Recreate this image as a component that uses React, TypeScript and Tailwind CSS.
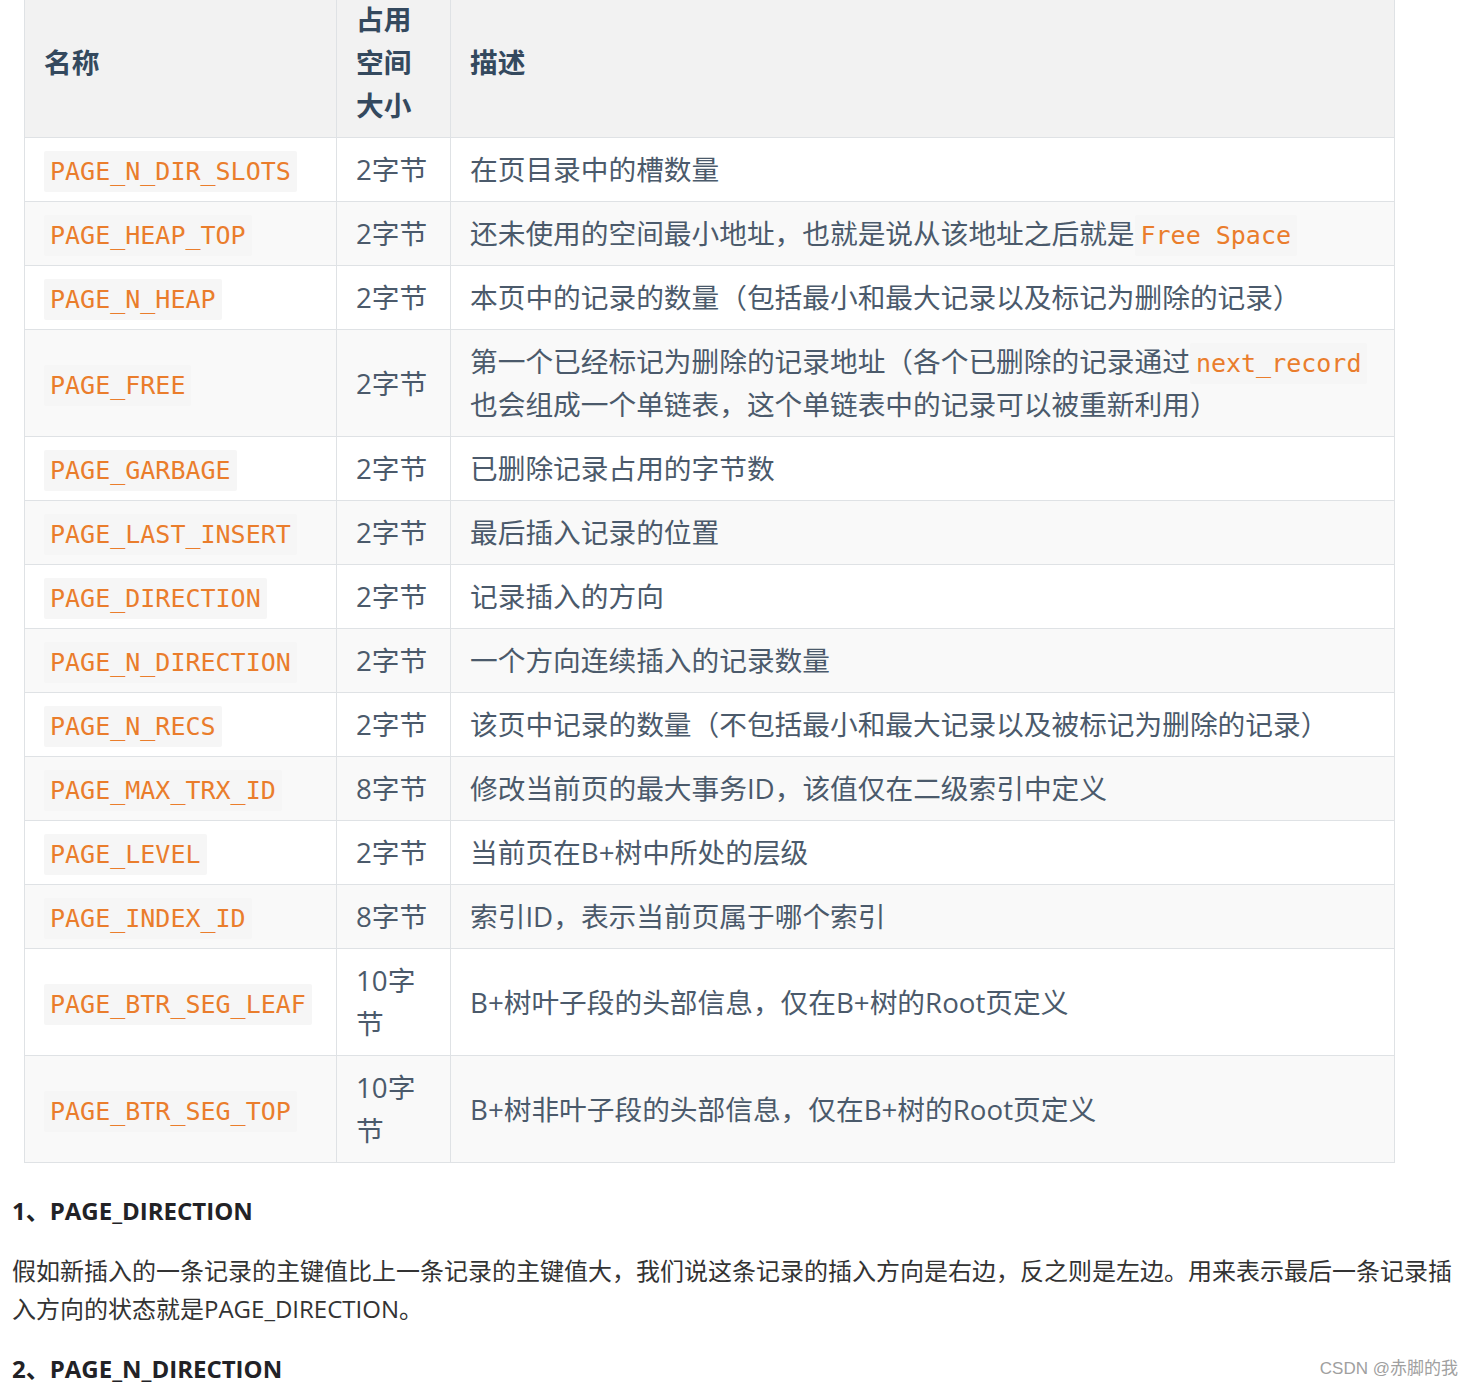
import React from "react";

type Part = string | { code: string } | { br: true };
type Row = { name: string; size: string; desc: Part[] };

const rows: Row[] = [
  { name: "PAGE_N_DIR_SLOTS", size: "2字节", desc: ["在页目录中的槽数量"] },
  { name: "PAGE_HEAP_TOP", size: "2字节", desc: ["还未使用的空间最小地址，也就是说从该地址之后就是", { code: "Free Space" }] },
  { name: "PAGE_N_HEAP", size: "2字节", desc: ["本页中的记录的数量（包括最小和最大记录以及标记为删除的记录）"] },
  { name: "PAGE_FREE", size: "2字节", desc: ["第一个已经标记为删除的记录地址（各个已删除的记录通过", { code: "next_record" }, { br: true }, "也会组成一个单链表，这个单链表中的记录可以被重新利用）"] },
  { name: "PAGE_GARBAGE", size: "2字节", desc: ["已删除记录占用的字节数"] },
  { name: "PAGE_LAST_INSERT", size: "2字节", desc: ["最后插入记录的位置"] },
  { name: "PAGE_DIRECTION", size: "2字节", desc: ["记录插入的方向"] },
  { name: "PAGE_N_DIRECTION", size: "2字节", desc: ["一个方向连续插入的记录数量"] },
  { name: "PAGE_N_RECS", size: "2字节", desc: ["该页中记录的数量（不包括最小和最大记录以及被标记为删除的记录）"] },
  { name: "PAGE_MAX_TRX_ID", size: "8字节", desc: ["修改当前页的最大事务ID，该值仅在二级索引中定义"] },
  { name: "PAGE_LEVEL", size: "2字节", desc: ["当前页在B+树中所处的层级"] },
  { name: "PAGE_INDEX_ID", size: "8字节", desc: ["索引ID，表示当前页属于哪个索引"] },
  { name: "PAGE_BTR_SEG_LEAF", size: "10字节", desc: ["B+树叶子段的头部信息，仅在B+树的Root页定义"] },
  { name: "PAGE_BTR_SEG_TOP", size: "10字节", desc: ["B+树非叶子段的头部信息，仅在B+树的Root页定义"] },
];

function Code({ children }: { children: React.ReactNode }) {
  return (
    <code className="font-['DejaVu_Sans_Mono','Liberation_Mono',monospace] text-[25px] leading-none text-[#ea7d2c] bg-[#f6f6f6] px-[6px] py-[6px] rounded-[2px] whitespace-nowrap">
      {children}
    </code>
  );
}

export default function App() {
  return (
    <div className="relative w-[1474px] h-[1389px] overflow-hidden bg-white">
      <div className="px-[12px]">
        <table className="table-fixed border-collapse w-[1370px] ml-[12px] -mt-[13px] font-['Open_Sans','Noto_Sans_CJK_SC',sans-serif] text-[27.7px] leading-[43px] text-[#4b5a6b]">
          <colgroup>
            <col className="w-[312px]" />
            <col className="w-[114px]" />
            <col className="w-[944px]" />
          </colgroup>
          <thead>
            <tr className="bg-[#f2f2f2]">
              <th className="border border-[#dfe2e5] px-[19px] py-[10px] text-left font-bold text-[#34495e]">名称</th>
              <th className="border border-[#dfe2e5] px-[19px] py-[10px] text-left font-bold text-[#34495e]">占用空间大小</th>
              <th className="border border-[#dfe2e5] px-[19px] py-[10px] text-left font-bold text-[#34495e]">描述</th>
            </tr>
          </thead>
          <tbody>
            {rows.map((r, i) => (
              <tr key={r.name} className={i % 2 === 1 ? "bg-[#f9f9f9]" : "bg-white"}>
                <td className="border border-[#dfe2e5] px-[19px] py-[10px] align-middle">
                  <Code>{r.name}</Code>
                </td>
                <td className="border border-[#dfe2e5] px-[19px] py-[10px] align-middle">{r.size}</td>
                <td className="border border-[#dfe2e5] px-[19px] py-[10px] align-middle">
                  {r.desc.map((p, j) => {
                    if (typeof p === "string") return <span key={j}>{p}</span>;
                    if ("br" in p) return <br key={j} />;
                    return <Code key={j}>{p.code}</Code>;
                  })}
                </td>
              </tr>
            ))}
          </tbody>
        </table>

        <div className="font-['Open_Sans','Noto_Sans_CJK_SC',sans-serif] text-[#333333]">
          <h2 className="mt-[30px] text-[24px] leading-[36px] font-bold text-[#222226]">1、PAGE_DIRECTION</h2>
          <p className="mt-[23px] text-[24px] leading-[38px] text-[#333333]">
            假如新插入的一条记录的主键值比上一条记录的主键值大，我们说这条记录的插入方向是右边，反之则是左边。用来表示最后一条记录插入方向的状态就是PAGE_DIRECTION。
          </p>
          <h2 className="mt-[23px] text-[24px] leading-[36px] font-bold text-[#222226]">2、PAGE_N_DIRECTION</h2>
        </div>
      </div>

      <div className="absolute right-[16px] bottom-[8px] font-['Liberation_Sans','Noto_Sans_CJK_SC',sans-serif] text-[17px] text-[#a0a0a0]">
        CSDN @赤脚的我
      </div>
    </div>
  );
}
